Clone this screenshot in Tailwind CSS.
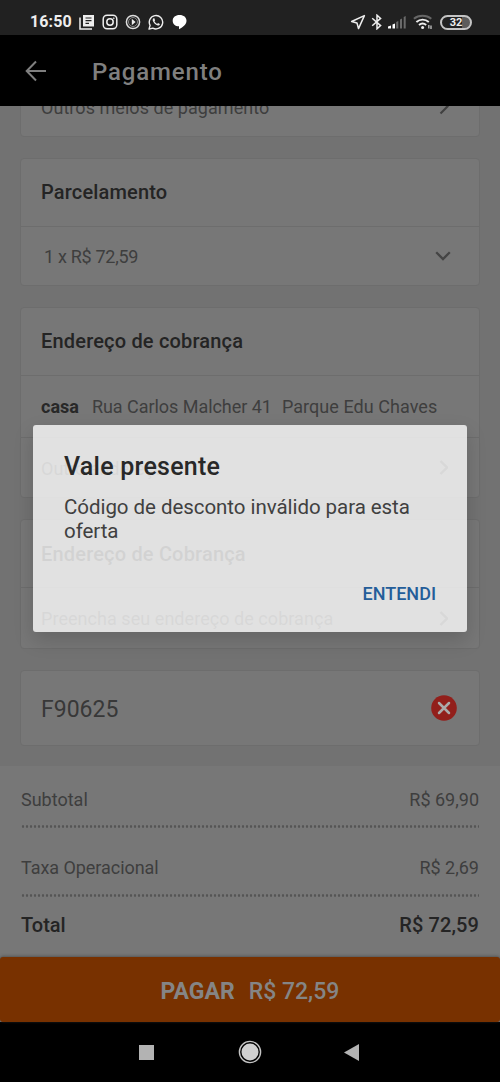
<!DOCTYPE html>
<html lang="pt-BR">
<head>
<meta charset="utf-8">
<meta name="viewport" content="width=device-width, initial-scale=1">
<title>Pagamento</title>
<script src="https://cdn.jsdelivr.net/npm/@tailwindcss/browser@4"></script>
</head>
<body class="bg-black">
<div class="relative flex h-[1082px] w-[500px] flex-col overflow-hidden bg-[#727272] font-['Roboto',sans-serif] text-[18px] leading-6 text-[#3e3e3e]">

  <!-- Status bar -->
  <header class="flex h-[35px] shrink-0 items-center bg-[#212121] pt-[9px] pl-[30px] text-[#eeeeee]">
    <span class="w-[49px] text-[16px] font-bold leading-5 tracking-[0.100px]">16:50</span>
    <svg class="h-4 w-4" viewBox="0 0 16 16" fill="none"><path d="M4 1H15V12.500H4Z" fill="#eee"/><path d="M1 3.500V15H13" stroke="#eee" stroke-width="1.500"/><path d="M6.500 4H12.500M6.500 6.700H12.500M6.500 9.400H10" stroke="#212121" stroke-width="1.200"/></svg>
    <svg class="ml-[7px] h-4 w-4" viewBox="0 0 16 16" fill="none" stroke="#eee" stroke-width="1.500"><rect x="1.200" y="1.200" width="13.600" height="13.600" rx="4"/><circle cx="8" cy="8" r="3.200"/><circle cx="11.800" cy="4.200" r=".5" fill="#eee" stroke-width=".6"/></svg>
    <svg class="ml-[7px] h-4 w-4" viewBox="0 0 16 16" fill="none"><circle cx="8" cy="8" r="6.600" stroke="#ddd" stroke-width="1.500"/><circle cx="8" cy="8" r="4.500" stroke="#888" stroke-width="1"/><path d="M6.800 4.800L10.600 8L6.800 11.200Z" fill="#eee"/></svg>
    <svg class="ml-[7px] h-4 w-4" viewBox="0 0 16 16" fill="none"><path d="M1 15.100L2.100 11.400A6.700 6.700 0 1 1 4.800 14.100Z" stroke="#eee" stroke-width="1.400" stroke-linejoin="round"/><path d="M5.700 4.200C4.500 4.800 4.400 6.200 5.300 7.800C6.400 9.800 8.200 11.200 9.900 11.500C11.200 11.600 12 10.700 11.900 9.900L10 8.900L9.100 9.900C7.900 9.400 7 8.500 6.400 7.300L7.100 6.400L6.400 4.300Z" fill="#eee"/></svg>
    <svg class="ml-[8px] h-4 w-4" viewBox="0 0 16 16"><path d="M7.500 1C11.800 1 14.500 3.400 14.500 6.800C14.500 10.600 10.500 13.600 7 15.200V12.300C3.200 12.200 .7 9.900 .7 6.700C.7 3.300 3.500 1 7.500 1Z" fill="#fff"/></svg>
    <svg class="ml-[162px] h-4 w-4" viewBox="0 0 16 16" fill="none"><path d="M14.400 1.600L1.600 7.500L7 9L8.500 14.600Z" stroke="#eee" stroke-width="1.500" stroke-linejoin="round"/></svg>
    <svg class="ml-[5px] h-4 w-3" viewBox="0 0 12 16" fill="none"><path d="M1.200 4.200L9.600 11.600L6 14.800V1.200L9.600 4.400L1.200 11.800" stroke="#eee" stroke-width="1.500"/></svg>
    <svg class="ml-[4px] h-4 w-5" viewBox="0 0 20 16"><path d="M1 12.500L4 11.500V14.500H1ZM5.500 10.500L8 9.500V14.500H5.500Z" fill="#fff"/><path d="M9.200 8L11.300 7V14.500H9.200ZM13 5.500L15 4.500V14.500H13ZM16.700 3L18.700 2V14.500H16.700Z" fill="#6a6a6a"/></svg>
    <svg class="ml-[6px] h-4 w-5" viewBox="0 0 20 16" fill="none" stroke-width="1.900"><path d="M.9 4.700C5.500 .7 13.500 .7 18.300 4.700" stroke="#666"/><path d="M3.400 8C7 4.800 12.200 4.800 15.800 8M6 11C8.200 9.200 11 9.200 13.200 11" stroke="#eee"/><circle cx="9.600" cy="13.600" r="1.500" fill="#eee"/><path d="M15.800 11V14.500M18 11.500V15" stroke="#bbb" stroke-width="1.400"/></svg>
    <div class="ml-[7px] flex h-[15px] w-[32px] items-center rounded-full border-2 border-[#c4c4c4] bg-linear-to-r from-[#212121] from-70% to-[#5c5c5c] to-72% text-[11px] font-bold leading-3"><span class="w-full pt-px text-center">32</span></div>
  </header>

  <!-- App bar -->
  <div class="z-10 flex h-[71px] shrink-0 items-center bg-black pl-[25px] text-[#7f7f7f]">
    <svg class="h-6 w-[22px]" viewBox="0 0 22 24" fill="none" stroke="#7f7f7f" stroke-width="2"><path d="M21 12H2M11 2.500L1.700 12L11 21.500"/></svg>
    <h1 class="ml-[45px] pt-[2px] text-[24px] font-medium leading-8 tracking-[0.850px]">Pagamento</h1>
  </div>

  <!-- Form cards -->
  <main class="flex h-[660px] shrink-0 flex-col gap-[21px] px-5">
    <section class="-mt-[30px] flex h-[61px] shrink-0 items-center justify-between rounded-sm border border-[#6d6d6d] bg-[#777] px-5">
      <span class="pt-[3px] tracking-[0.050px]">Outros meios de pagamento</span>
      <svg class="mr-[10px] h-4 w-[10px]" viewBox="0 0 10 16" fill="none" stroke="#404040" stroke-width="2.200"><path d="M1.500 1L8.500 7.500L1.500 14.500"/></svg>
    </section>
    <section class="h-[128px] shrink-0 rounded-sm border border-[#6d6d6d] bg-[#777]">
      <h2 class="flex h-[68px] items-center border-b border-[#6d6d6d] px-5 pb-[2px] text-[20px] font-medium tracking-[0.160px] text-[#242424]">Parcelamento</h2>
      <div class="flex h-[58px] items-center justify-between pr-[28px] pl-[23px]"><span class="pt-px tracking-[-0.300px]">1 x R$ 72,59</span>
        <svg class="h-[10px] w-4" viewBox="0 0 16 10" fill="none" stroke="#444" stroke-width="2.300"><path d="M1.200 1.200L8 8L14.800 1.200"/></svg></div>
    </section>
    <section class="h-[191px] shrink-0 rounded-sm border border-[#6d6d6d] bg-[#777]">
      <h2 class="flex h-[68px] items-center border-b border-[#6d6d6d] px-5 pb-[2px] text-[20px] font-medium tracking-[0.180px] text-[#242424]">Endereço de cobrança</h2>
      <div class="flex h-[62px] items-center border-b border-[#6d6d6d] px-5 pt-px whitespace-nowrap"><b class="font-bold text-[#282828]">casa</b><span class="ml-[13px] tracking-[-0.040px]">Rua Carlos Malcher 41</span><span class="ml-[10px] tracking-[0.050px]">Parque Edu Chaves</span></div>
      <div class="flex h-[59px] items-center justify-between pr-[31px] pl-5"><span class="pt-[2px]">Outro endereço</span>
        <svg class="h-[15px] w-[9px]" viewBox="0 0 9 15" fill="none" stroke="#404040" stroke-width="2.300"><path d="M1.500 1L8 7.500L1.500 14"/></svg></div>
    </section>
    <section class="h-[130px] shrink-0 rounded-sm border border-[#6d6d6d] bg-[#777]">
      <h2 class="flex h-[68px] items-center border-b border-[#6d6d6d] px-5 text-[20px] font-medium tracking-[0.180px] text-[#202020]">Endereço de Cobrança</h2>
      <div class="flex h-[60px] items-center justify-between pr-[31px] pl-5"><span class="pt-[2px] tracking-[0.050px]">Preencha seu endereço de cobrança</span>
        <svg class="h-[15px] w-[9px]" viewBox="0 0 9 15" fill="none" stroke="#404040" stroke-width="2.300"><path d="M1.500 1L8 7.500L1.500 14"/></svg></div>
    </section>
    <section class="flex h-[76px] shrink-0 items-center justify-between rounded-sm border border-[#6d6d6d] bg-[#777] pr-[22px] pl-5">
      <span class="pt-[3px] text-[23px] leading-7 text-[#383838]">F90625</span>
      <svg class="h-[26px] w-[26px]" viewBox="0 0 26 26"><circle cx="13" cy="13" r="12.800" fill="#921f1b"/><path d="M8 8L18 18M18 8L8 18" stroke="#aaa" stroke-width="2.500" stroke-linecap="round"/></svg>
    </section>
  </main>

  <!-- Totals -->
  <section class="flex h-[191px] shrink-0 flex-col bg-[#777] px-[21px]">
    <div class="flex h-[59px] items-end justify-between pb-[13px]"><span>Subtotal</span><span>R$ 69,90</span></div>
    <div class="h-[3px] bg-[radial-gradient(circle,#555_38%,transparent_62%)] bg-size-[4px_3px]"></div>
    <div class="flex h-[66px] items-end justify-between pb-[14px]"><span class="tracking-[-0.050px]">Taxa Operacional</span><span>R$ 2,69</span></div>
    <div class="h-[3px] bg-[radial-gradient(circle,#555_38%,transparent_62%)] bg-size-[4px_3px]"></div>
    <div class="flex h-[57px] items-center justify-between pb-[2px] text-[20px] font-medium text-[#242424]"><span>Total</span><span class="tracking-[0.100px]">R$ 72,59</span></div>
  </section>

  <button class="z-10 flex h-[65px] shrink-0 items-center justify-center rounded-[3px] bg-[#783100] pt-[4px] text-[23px] text-[#858585] shadow-[0_-1px_3px_#555]"><b class="font-bold">PAGAR</b><span class="ml-[14px] font-medium">R$ 72,59</span></button>

  <!-- System navigation -->
  <nav class="flex h-[60px] shrink-0 items-center bg-black pl-[139px]">
    <div class="h-[15px] w-[15px] bg-[#b3b3b3]"></div>
    <svg class="ml-[84px] h-6 w-6" viewBox="0 0 24 24"><circle cx="12" cy="12" r="10.600" fill="none" stroke="#c4c4c4" stroke-width="1.400"/><circle cx="12" cy="12" r="8.500" fill="#d0d0d0"/></svg>
    <svg class="ml-[82px] h-[17px] w-[15px]" viewBox="0 0 15 17"><path d="M15 0V17L0 8.500Z" fill="#b3b3b3"/></svg>
  </nav>

  <!-- Dialog -->
  <div role="dialog" class="absolute top-[424.500px] left-[33px] z-20 flex h-[207.500px] w-[434px] flex-col rounded-[3px] bg-[#f7f7f7]/83 px-[31px] pt-[26px] shadow-[0_8px_20px_rgba(0,0,0,0.160)]">
    <h2 class="text-[25px] font-medium leading-8 tracking-[0.250px] text-[#282828]">Vale presente</h2>
    <p class="mt-[12px] text-[20.500px] leading-6 tracking-[-0.050px] text-[#404040]">Código de desconto inválido para esta<br>oferta</p>
    <button class="mt-[39px] self-end text-[18px] font-medium leading-6 text-[#245d99]">ENTENDI</button>
  </div>
</div>
</body>
</html>
